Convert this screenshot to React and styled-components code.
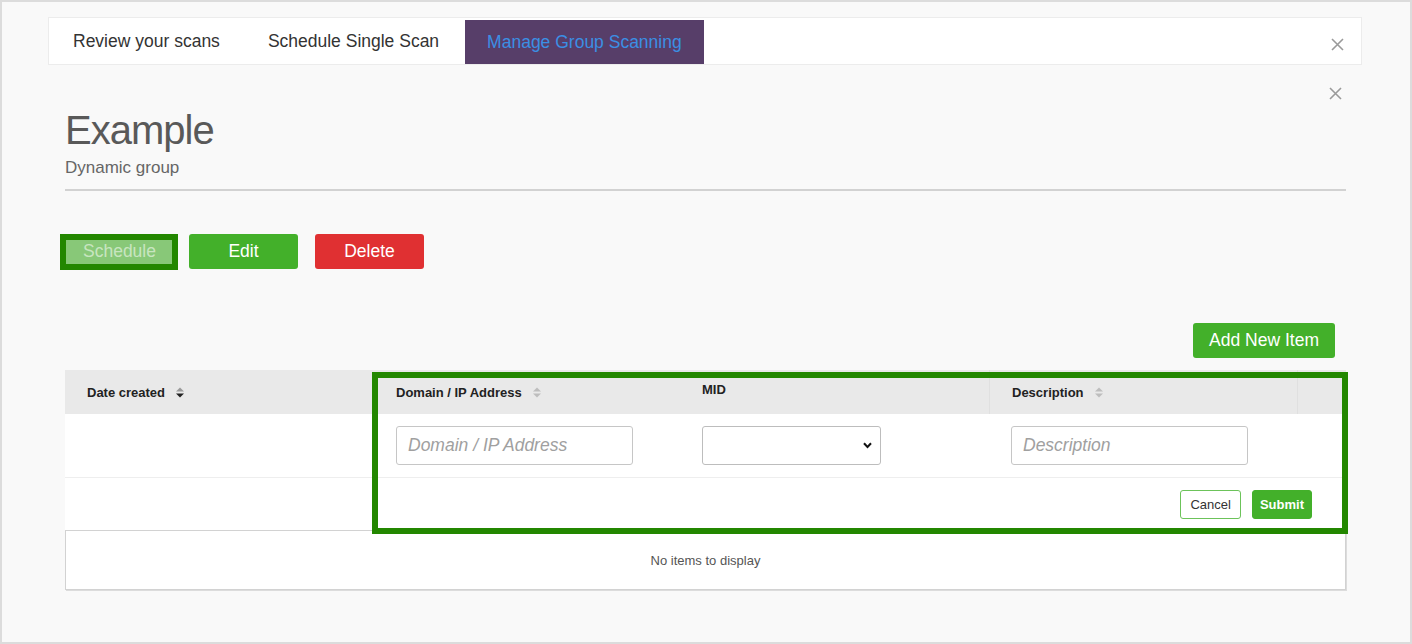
import React from "react";
import styled, { createGlobalStyle } from "styled-components";

const GlobalStyle = createGlobalStyle`
  html, body { margin: 0; padding: 0; }
  body {
    font-family: "Liberation Sans", Arial, sans-serif;
    background: #f9f9f9;
    color: #333;
  }
  * { box-sizing: border-box; }
`;

const Frame = styled.div`
  width: 1412px;
  height: 644px;
  border: 2px solid #dcdcdc;
  background: #f9f9f9;
  overflow: hidden;
`;

const TabBar = styled.div`
  margin: 15px 48px 0 46px;
  height: 48px;
  background: #fff;
  border: 1px solid #ececec;
  display: flex;
  align-items: stretch;
`;

const Tab = styled.div`
  display: flex;
  align-items: center;
  padding: 0 ${(p) => (p.$active ? 22 : 24)}px;
  font-size: 17.5px;
  color: ${(p) => (p.$active ? "#3b8fe4" : "#333")};
  background: ${(p) => (p.$active ? "#573e69" : "transparent")};
  margin: ${(p) => (p.$active ? "2px 0 0 2px" : "0")};
  cursor: pointer;
  white-space: nowrap;
`;

const Spacer = styled.div`
  flex: 1;
`;

const CloseButton = styled.button`
  border: none;
  background: transparent;
  padding: 0;
  display: flex;
  align-items: center;
  justify-content: center;
  width: 14px;
  height: 14px;
  cursor: pointer;
  align-self: ${(p) => (p.$top ? "flex-start" : "center")};
  margin-right: ${(p) => p.$mr || 0}px;
  margin-top: ${(p) => p.$mt || 0}px;
`;

const Content = styled.div`
  padding: 20px 64px 0 63px;
`;

const Header = styled.div`
  display: flex;
  justify-content: space-between;
  align-items: flex-start;
`;

const TitleBlock = styled.div`
  padding-top: 22px;
`;

const Title = styled.h1`
  margin: 0;
  font-weight: 400;
  font-size: 40px;
  line-height: 46px;
  letter-spacing: -1px;
  color: #595959;
`;

const Subtitle = styled.div`
  margin-top: 5px;
  font-size: 17px;
  line-height: 20px;
  color: #666;
`;

const Divider = styled.hr`
  margin: 11px 0 0;
  border: none;
  height: 2px;
  background: #d2d2d2;
`;

const ButtonRow = styled.div`
  margin-top: 43px;
  display: flex;
  align-items: center;
`;

const ActionButton = styled.button`
  position: relative;
  width: 109px;
  height: 35px;
  border: none;
  border-radius: 3px;
  font-family: inherit;
  font-size: 17.5px;
  color: ${(p) => (p.$disabled ? "rgba(255,255,255,0.55)" : "#fff")};
  background: ${(p) =>
    p.$variant === "danger" ? "#e03032" : p.$disabled ? "#88c878" : "#43b02a"};
  margin-left: ${(p) => p.$ml || 0}px;
  cursor: pointer;
`;

const Highlight = styled.div`
  position: absolute;
  pointer-events: none;
  border: 6px solid #238700;
  left: ${(p) => p.$l}px;
  top: ${(p) => p.$t}px;
  width: ${(p) => p.$w}px;
  height: ${(p) => p.$h}px;
`;

const AddRow = styled.div`
  margin-top: 54px;
  display: flex;
  justify-content: flex-end;
  padding-right: 11px;
`;

const AddButton = styled.button`
  height: 35px;
  padding: 0 16px;
  border: none;
  border-radius: 3px;
  background: #43b02a;
  color: #fff;
  font-family: inherit;
  font-size: 17.5px;
  cursor: pointer;
`;

const Table = styled.div`
  position: relative;
  margin-top: 12px;
`;

const HeaderRow = styled.div`
  display: grid;
  grid-template-columns: 309px 306px 309px 308px 1fr;
  height: 44px;
  background: #e9e9e9;
`;

const HeaderCell = styled.div`
  display: flex;
  align-items: center;
  gap: 11px;
  padding: 0 22px ${(p) => (p.$raised ? 5 : 0)}px 22px;
  font-size: 13px;
  font-weight: 700;
  color: #222;
  border-left: ${(p) => (p.$sep ? "1px solid #e0e0e0" : "none")};
`;

const InputRow = styled.div`
  display: grid;
  grid-template-columns: 309px 306px 309px 308px 1fr;
  height: 64px;
  background: #fff;
  border-bottom: 1px solid #eee;
`;

const InputCell = styled.div`
  display: flex;
  align-items: center;
  padding: 0 22px;
`;

const TextInput = styled.input`
  width: 237px;
  height: 39px;
  border: 1px solid #c6c6c6;
  border-radius: 3px;
  padding: 0 11px;
  font-family: inherit;
  font-size: 17.5px;
  color: #333;
  background: #fff;
  outline: none;
  &::placeholder {
    color: #a0a0a0;
    font-style: italic;
  }
`;

const SelectWrap = styled.div`
  position: relative;
  width: 179px;
  height: 39px;
`;

const Select = styled.select`
  appearance: none;
  -webkit-appearance: none;
  width: 100%;
  height: 100%;
  border: 1px solid #bdbdbd;
  border-radius: 3px;
  background: #fff;
  font-family: inherit;
  font-size: 15px;
  padding: 0 28px 0 10px;
  outline: none;
`;

const Chevron = styled.svg`
  position: absolute;
  right: 9px;
  top: 16px;
  pointer-events: none;
`;

const ActionRow = styled.div`
  height: 52px;
  background: #fff;
  display: flex;
  align-items: center;
  justify-content: flex-end;
  gap: 11px;
  padding-right: 34px;
`;

const SmallButton = styled.button`
  height: 29px;
  padding: 0 ${(p) => (p.$primary ? 7 : 9)}px;
  border-radius: 3px;
  font-family: inherit;
  font-size: 13px;
  font-weight: ${(p) => (p.$primary ? 700 : 400)};
  color: ${(p) => (p.$primary ? "#fff" : "#333")};
  background: ${(p) => (p.$primary ? "#43b02a" : "#fff")};
  border: 1px solid ${(p) => (p.$primary ? "#43b02a" : "#6cc35a")};
  cursor: pointer;
`;

const EmptyBox = styled.div`
  height: 60px;
  background: #fff;
  border: 1px solid #d2d2d2;
  box-shadow: 1px 1px 0 #dcdcdc;
  display: flex;
  align-items: center;
  justify-content: center;
  font-size: 13px;
  color: #555;
`;

const XIcon = () => (
  <svg width="13" height="13" viewBox="0 0 13 13">
    <path d="M1 1 L12 12 M12 1 L1 12" stroke="#9a9a9a" strokeWidth="1.6" fill="none" />
  </svg>
);

const SortIcon = ({ active }) => (
  <svg width="8" height="11" viewBox="0 0 8 11">
    <path d="M0 4.5 L4 0.5 L8 4.5 Z" fill={active ? "#9a9a9a" : "#bdbdbd"} />
    <path d="M0 6.5 L8 6.5 L4 10.5 Z" fill={active ? "#222" : "#bdbdbd"} />
  </svg>
);

export default function App() {
  return (
    <>
      <GlobalStyle />
      <Frame>
        <TabBar>
          <Tab>Review your scans</Tab>
          <Tab>Schedule Single Scan</Tab>
          <Tab $active>Manage Group Scanning</Tab>
          <Spacer />
          <CloseButton $mr={17} $mt={7} aria-label="Close">
            <XIcon />
          </CloseButton>
        </TabBar>

        <Content>
          <Header>
            <TitleBlock>
              <Title>Example</Title>
              <Subtitle>Dynamic group</Subtitle>
            </TitleBlock>
            <CloseButton $top $mr={4} $mt={1} aria-label="Close">
              <XIcon />
            </CloseButton>
          </Header>
          <Divider />

          <ButtonRow>
            <ActionButton $disabled>
              Schedule
              <Highlight $l={-5} $t={0} $w={118} $h={36} />
            </ActionButton>
            <ActionButton $ml={15}>Edit</ActionButton>
            <ActionButton $ml={17} $variant="danger">
              Delete
            </ActionButton>
          </ButtonRow>

          <AddRow>
            <AddButton>Add New Item</AddButton>
          </AddRow>

          <Table>
            <HeaderRow>
              <HeaderCell>
                Date created <SortIcon active />
              </HeaderCell>
              <HeaderCell>
                Domain / IP Address <SortIcon />
              </HeaderCell>
              <HeaderCell $raised>MID</HeaderCell>
              <HeaderCell $sep>
                Description <SortIcon />
              </HeaderCell>
              <HeaderCell $sep />
            </HeaderRow>
            <InputRow>
              <InputCell />
              <InputCell>
                <TextInput placeholder="Domain / IP Address" />
              </InputCell>
              <InputCell>
                <SelectWrap>
                  <Select defaultValue="">
                    <option value=""></option>
                  </Select>
                  <Chevron width="9" height="7" viewBox="0 0 9 7">
                    <path d="M1 1.2 L4.5 5 L8 1.2" stroke="#111" strokeWidth="2" fill="none" />
                  </Chevron>
                </SelectWrap>
              </InputCell>
              <InputCell>
                <TextInput placeholder="Description" />
              </InputCell>
              <InputCell />
            </InputRow>
            <ActionRow>
              <SmallButton>Cancel</SmallButton>
              <SmallButton $primary>Submit</SmallButton>
            </ActionRow>
            <EmptyBox>No items to display</EmptyBox>
            <Highlight $l={307} $t={2} $w={976} $h={162} />
          </Table>
        </Content>
      </Frame>
    </>
  );
}
